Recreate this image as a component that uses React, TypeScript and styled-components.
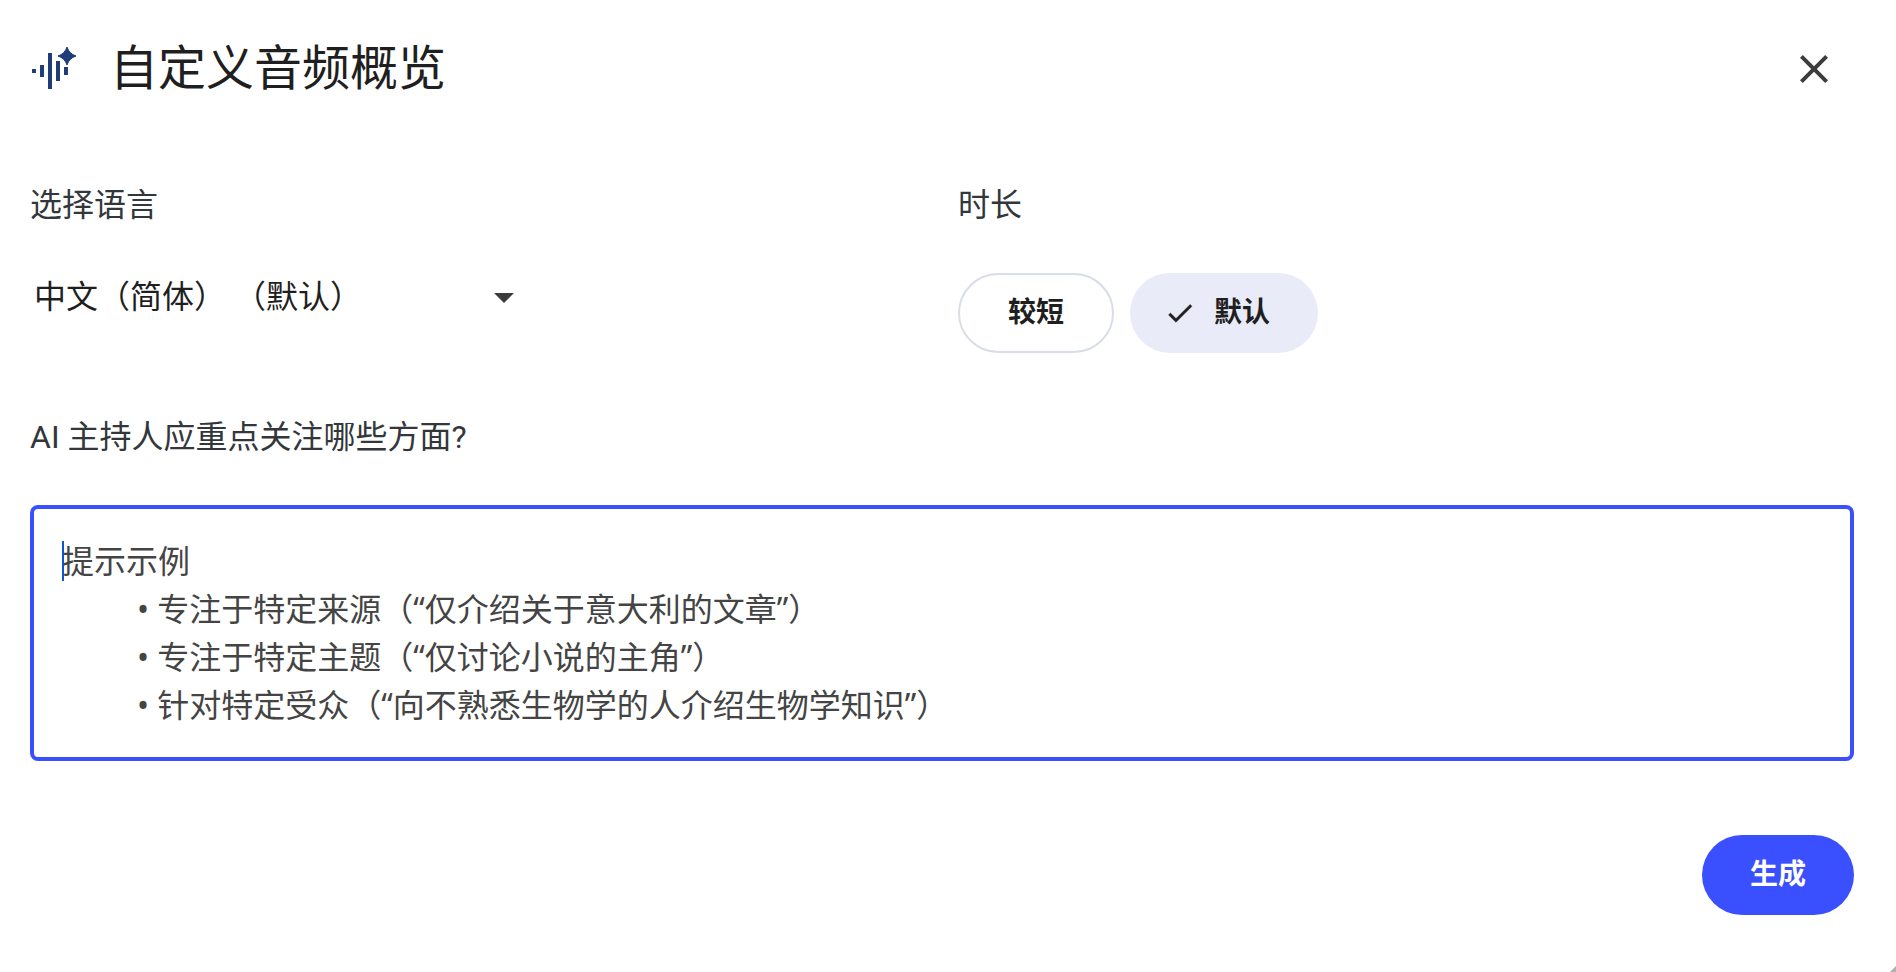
import React, { useState } from "react";
import styled, { createGlobalStyle } from "styled-components";

const GlobalStyle = createGlobalStyle`
  *, *::before, *::after { box-sizing: border-box; }
  body {
    margin: 0;
    background: #fff;
    color: #1f1f1f;
    font-family: Roboto, "Noto Sans CJK SC", sans-serif;
  }
  button, select { font-family: inherit; }
`;

const Dialog = styled.main`
  position: relative;
  display: flex;
  flex-direction: column;
  min-height: 100vh;
  padding: 29px 42px 56px 30px;
`;

const Header = styled.header`
  display: flex;
  align-items: center;
  gap: 32px;
  margin-bottom: 72px;
`;

const Title = styled.h1`
  flex: 1;
  margin: 0;
  font-size: 48px;
  line-height: 64px;
  font-weight: 400;
`;

const CloseButton = styled.button`
  display: grid;
  place-items: center;
  width: 80px;
  height: 80px;
  padding: 0;
  border: 0;
  border-radius: 50%;
  background: transparent;
  color: #3c3c3c;
  cursor: pointer;
`;

const Options = styled.div`
  display: grid;
  grid-template-columns: 1fr 1fr;
  gap: 32px;
  margin-bottom: 60px;
`;

const Field = styled.div`
  display: flex;
  flex-direction: column;
  align-items: stretch;
  gap: 44px;
`;

const Label = styled.label`
  color: #33373b;
  font-size: 32px;
  line-height: 48px;
`;

const SelectWrap = styled.div`
  position: relative;
  width: 496px;
  max-width: 100%;
`;

const Select = styled.select`
  display: block;
  width: 100%;
  height: 48px;
  padding: 0 48px 0 4px;
  border: 0;
  outline: 0;
  appearance: none;
  background: transparent;
  color: #1f1f1f;
  font-size: 32px;
  cursor: pointer;
`;

const SelectArrow = styled.svg`
  position: absolute;
  top: 20px;
  right: 12px;
  pointer-events: none;
`;

const Pills = styled.div`
  display: flex;
  gap: 16px;
`;

const Pill = styled.button<{ $selected: boolean }>`
  display: flex;
  align-items: center;
  gap: 18px;
  height: 80px;
  padding: ${(p) => (p.$selected ? "0 48px 0 34px" : "0 48px")};
  border: ${(p) => (p.$selected ? "0" : "2px solid #d9dce9")};
  border-radius: 40px;
  background: ${(p) => (p.$selected ? "#e9ebf9" : "#fff")};
  color: #1f1f1f;
  font-size: 28px;
  line-height: 40px;
  font-weight: 700;
  cursor: pointer;
`;

const PromptBox = styled.div`
  position: relative;
  border: 4px solid #3a50ff;
  border-radius: 8px;
  padding: 28px;
`;

const Prompt = styled.textarea`
  display: block;
  width: 100%;
  height: 192px;
  padding: 0;
  border: 0;
  outline: 0;
  resize: none;
  overflow: hidden;
  background: transparent;
  color: #1f1f1f;
  caret-color: #0b57d0;
  font-family: "Noto Sans", "Noto Sans CJK SC", sans-serif;
  font-size: 32px;
  line-height: 48px;
  tab-size: 75px;

  &::placeholder {
    color: #444;
    opacity: 1;
  }
  &:placeholder-shown {
    caret-color: transparent;
  }
`;

const Caret = styled.span`
  position: absolute;
  top: 32px;
  left: 28px;
  width: 2px;
  height: 40px;
  background: #0b57d0;
`;

const Actions = styled.footer`
  display: flex;
  justify-content: flex-end;
  margin-top: 74px;
`;

const GenerateButton = styled.button`
  height: 80px;
  padding: 0 48px;
  border: 0;
  border-radius: 40px;
  background: #3a50ff;
  color: #fff;
  font-size: 28px;
  line-height: 40px;
  font-weight: 700;
  cursor: pointer;
`;

const ResizeCorner = styled.span`
  position: absolute;
  right: 0;
  bottom: 0;
  width: 6px;
  height: 6px;
  background: #b0b0b0;
  clip-path: polygon(100% 0, 100% 100%, 0 100%);
`;

const AudioIcon = () => (
  <svg width="48" height="48" viewBox="0 1 48 48" fill="#1f3d7a" aria-hidden="true">
    <path d="M2 25h4v4H2zM10 21h4v12h-4zM18 9h4v36h-4zM26 17h4v20h-4zM34 23h4v8h-4z" />
    <path d="M37 3Q39.2 9.8 46 12Q39.2 14.2 37 21Q34.8 14.2 28 12Q34.8 9.8 37 3z" stroke="#1f3d7a" strokeWidth="1" />
  </svg>
);

const CloseIcon = () => (
  <svg width="48" height="48" viewBox="0 0 24 24" fill="currentColor" aria-hidden="true">
    <path d="M19 6.41 17.59 5 12 10.59 6.41 5 5 6.41 10.59 12 5 17.59 6.41 19 12 13.41 17.59 19 19 17.59 13.41 12z" />
  </svg>
);

const CheckIcon = () => (
  <svg width="32" height="32" viewBox="0 0 24 24" fill="currentColor" stroke="currentColor" strokeWidth="0.3" aria-hidden="true">
    <path d="M9 16.17 4.83 12l-1.42 1.41L9 19 21 7l-1.41-1.41z" />
  </svg>
);

const placeholder = [
  "提示示例",
  "\t• 专注于特定来源（“仅介绍关于意大利的文章”）",
  "\t• 专注于特定主题（“仅讨论小说的主角”）",
  "\t• 针对特定受众（“向不熟悉生物学的人介绍生物学知识”）",
].join("\n");

const lengths = ["较短", "默认"];

export default function App() {
  const [length, setLength] = useState("默认");
  const [prompt, setPrompt] = useState("");

  return (
    <>
      <GlobalStyle />
      <Dialog>
        <Header>
          <AudioIcon />
          <Title>自定义音频概览</Title>
          <CloseButton type="button" aria-label="关闭">
            <CloseIcon />
          </CloseButton>
        </Header>

        <Options>
          <Field>
            <Label htmlFor="language">选择语言</Label>
            <SelectWrap>
              <Select id="language" defaultValue="zh-CN">
                <option value="zh-CN">中文（简体） （默认）</option>
              </Select>
              <SelectArrow width="20" height="10" viewBox="0 0 20 10" fill="#3c3c3c" aria-hidden="true">
                <path d="M0 0h20L10 10z" />
              </SelectArrow>
            </SelectWrap>
          </Field>
          <Field>
            <Label as="span" id="length-label">时长</Label>
            <Pills role="group" aria-labelledby="length-label">
              {lengths.map((item) => (
                <Pill
                  key={item}
                  type="button"
                  $selected={item === length}
                  aria-pressed={item === length}
                  onClick={() => setLength(item)}
                >
                  {item === length && <CheckIcon />}
                  {item}
                </Pill>
              ))}
            </Pills>
          </Field>
        </Options>

        <Field>
          <Label htmlFor="prompt">AI 主持人应重点关注哪些方面?</Label>
          <PromptBox>
            <Prompt
              id="prompt"
              placeholder={placeholder}
              value={prompt}
              onChange={(e) => setPrompt(e.target.value)}
            />
            {prompt === "" && <Caret aria-hidden="true" />}
          </PromptBox>
        </Field>

        <Actions>
          <GenerateButton type="button">生成</GenerateButton>
        </Actions>
        <ResizeCorner aria-hidden="true" />
      </Dialog>
    </>
  );
}
